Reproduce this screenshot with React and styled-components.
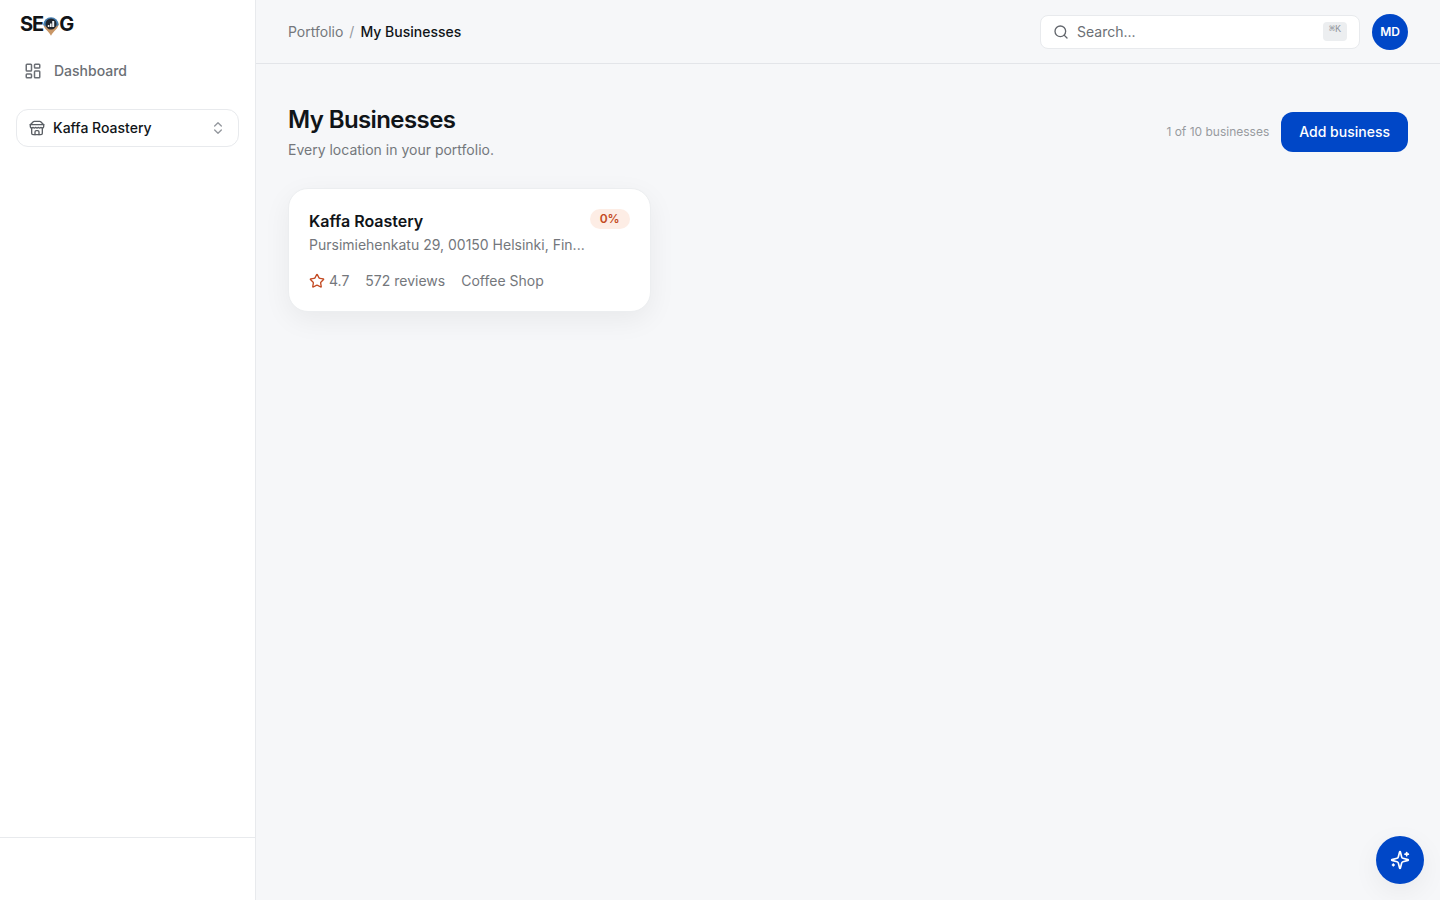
import React from "react";
import styled, { createGlobalStyle } from "styled-components";
import { ChevronsUpDown, LayoutDashboard, Search, Star } from "lucide-react";

const GlobalStyle = createGlobalStyle`
  *, *::before, *::after { box-sizing: border-box; }
  body {
    margin: 0;
    background: #f6f7f9;
    color: #101418;
    font-family: Inter, "Liberation Sans", sans-serif;
    font-size: 14px;
    line-height: 20px;
  }
  button, input { font: inherit; }
  h1, h2, p { margin: 0; }
  a { color: inherit; text-decoration: none; }
`;

const Shell = styled.div`
  display: flex;
  min-height: 100vh;
`;

const Sidebar = styled.aside`
  display: flex;
  flex-direction: column;
  flex: 0 0 256px;
  background: #ffffff;
  border-right: 1px solid #e8eaed;
`;

const LogoLink = styled.a`
  display: flex;
  align-items: center;
  height: 48px;
  padding: 0 20px;
`;

const Wordmark = styled.span`
  display: flex;
  align-items: center;
  font-size: 20px;
  line-height: 24px;
  font-weight: 700;
  letter-spacing: -0.05em;
  color: #111417;
`;

const SideNav = styled.nav`
  padding: 4px 16px;
`;

const NavItem = styled.a`
  display: flex;
  align-items: center;
  gap: 12px;
  height: 38px;
  padding: 0 8px;
  color: #6b6f75;
  font-weight: 500;
`;

const SwitcherWrap = styled.div`
  padding: 15px 16px;
`;

const Switcher = styled.button`
  display: flex;
  align-items: center;
  gap: 8px;
  width: 100%;
  height: 38px;
  padding: 0 12px;
  border: 1px solid #e8eaed;
  border-radius: 12px;
  background: #ffffff;
  color: #101418;
  font-weight: 500;

  span { flex: 1; text-align: left; }
`;

const SidebarFooter = styled.div`
  height: 63px;
  margin-top: auto;
  border-top: 1px solid #e8eaed;
`;

const Main = styled.div`
  flex: 1;
  min-width: 0;
`;

const TopBar = styled.header`
  display: flex;
  align-items: center;
  justify-content: space-between;
  height: 64px;
  padding: 0 32px;
  border-bottom: 1px solid #e3e5e9;
`;

const Breadcrumb = styled.nav`
  display: flex;
  gap: 6px;
  color: #74777c;

  span { color: #94989e; }
  strong { color: #101418; font-weight: 500; }
`;

const TopActions = styled.div`
  display: flex;
  align-items: center;
  gap: 12px;
`;

const SearchBox = styled.label`
  display: flex;
  align-items: center;
  gap: 8px;
  width: 320px;
  height: 34px;
  padding: 0 12px;
  border: 1px solid #e8eaed;
  border-radius: 8px;
  background: #ffffff;
  color: #62666c;
`;

const SearchInput = styled.input`
  flex: 1;
  min-width: 0;
  padding: 0;
  border: 0;
  outline: 0;
  background: transparent;
  color: #101418;

  &::placeholder { color: #6b6f75; opacity: 1; }
`;

const Shortcut = styled.kbd`
  height: 19px;
  padding: 0 6px;
  border-radius: 4px;
  background: #eceef0;
  color: #94989e;
  font-family: "Liberation Mono", monospace;
  font-size: 10px;
  line-height: 15px;
`;

const Avatar = styled.button`
  width: 36px;
  height: 36px;
  padding: 0;
  border: 0;
  border-radius: 50%;
  background: #0047c7;
  color: #ffffff;
  font-size: 12px;
  font-weight: 600;
`;

const Content = styled.main`
  display: flex;
  flex-direction: column;
  gap: 28px;
  padding: 40px 32px;
`;

const PageHeader = styled.div`
  display: flex;
  align-items: center;
  justify-content: space-between;
  gap: 16px;
`;

const Title = styled.h1`
  font-size: 24px;
  line-height: 32px;
  font-weight: 600;
  letter-spacing: -0.025em;
`;

const Subtitle = styled.p`
  margin-top: 4px;
  color: #74777c;
`;

const HeaderActions = styled.div`
  display: flex;
  align-items: center;
  gap: 12px;
`;

const Quota = styled.span`
  color: #989b9f;
  font-size: 12px;
`;

const PrimaryButton = styled.button`
  height: 40px;
  padding: 0 18px;
  border: 0;
  border-radius: 12px;
  background: #0047c7;
  color: #ffffff;
  font-weight: 500;
`;

const CardGrid = styled.div`
  display: grid;
  grid-template-columns: repeat(3, minmax(0, 1fr));
  gap: 16px;
`;

const Card = styled.a`
  display: block;
  padding: 20px;
  border: 1px solid #eceef0;
  border-radius: 20px;
  background: #ffffff;
  box-shadow: 0 8px 28px rgba(16, 20, 24, 0.06);
`;

const CardTop = styled.div`
  display: flex;
  align-items: flex-start;
  justify-content: space-between;
  gap: 4px;
`;

const CardText = styled.div`
  min-width: 0;
`;

const CardTitle = styled.h2`
  font-size: 16px;
  line-height: 24px;
  font-weight: 600;
`;

const Address = styled.p`
  overflow: hidden;
  color: #74777c;
  line-height: 24px;
  text-overflow: ellipsis;
  white-space: nowrap;
`;

const Badge = styled.span`
  flex: none;
  padding: 0 10px;
  border-radius: 10px;
  background: #fdede5;
  color: #c34a22;
  font-size: 12px;
  font-weight: 600;
`;

const Facts = styled.div`
  display: flex;
  align-items: center;
  gap: 16px;
  margin-top: 14px;
  color: #74777c;
`;

const Rating = styled.span`
  display: flex;
  align-items: center;
  gap: 4px;

  svg { color: #c34a22; }
`;

const AssistantButton = styled.button`
  position: fixed;
  right: 16px;
  bottom: 16px;
  display: grid;
  place-items: center;
  width: 48px;
  height: 48px;
  padding: 0;
  border: 0;
  border-radius: 50%;
  background: #0047c7;
  color: #ffffff;
  box-shadow: 0 8px 28px rgba(16, 20, 24, 0.06);
`;

const LineIcon = styled.svg.attrs({
  viewBox: "0 0 24 24",
  fill: "none",
  stroke: "currentColor",
  strokeWidth: 2,
  strokeLinecap: "round",
  strokeLinejoin: "round",
  "aria-hidden": true,
})`
  flex: none;
  width: ${(p) => p.$size}px;
  height: ${(p) => p.$size}px;
`;

const PinSvg = styled.svg`
  flex: none;
  margin-top: 4px;
`;

function PinMark() {
  return (
    <PinSvg width="16" height="20" viewBox="0 0 16 20" aria-hidden="true">
      <path d="M0.400 7.500C0.400 13 5.500 14.500 8 19.800C10.500 14.500 15.600 13 15.600 7.500Z" fill="#c99767" />
      <path d="M0.300 9A7.700 7.700 0 1 1 15.700 9L12.500 11H3.500Z" fill="#467eaf" />
      <circle cx="8" cy="8" r="5.500" fill="#20252d" />
      <path d="M4.800 9h1.600v2h-1.600zM7 7.500h1.600v3.500h-1.600zM9.200 5h2v6h-2z" fill="#f0f2f4" />
    </PinSvg>
  );
}

function StoreIcon() {
  return (
    <LineIcon $size={16} color="#5a5e64">
      <path d="m2 7 4.410-4.410A2 2 0 0 1 7.830 2h8.340a2 2 0 0 1 1.420.590L22 7" />
      <path d="M4 12v8a2 2 0 0 0 2 2h12a2 2 0 0 0 2-2v-8" />
      <path d="M15 22v-4a2 2 0 0 0-2-2h-2a2 2 0 0 0-2 2v4" />
      <path d="M2 7h20" />
      <path d="M22 7v3a2 2 0 0 1-2 2a2.700 2.700 0 0 1-1.590-.630.700.700 0 0 0-.820 0A2.700 2.700 0 0 1 16 12a2.700 2.700 0 0 1-1.590-.630.700.700 0 0 0-.820 0A2.700 2.700 0 0 1 12 12a2.700 2.700 0 0 1-1.590-.630.700.700 0 0 0-.820 0A2.700 2.700 0 0 1 8 12a2.700 2.700 0 0 1-1.590-.630.700.700 0 0 0-.820 0A2.700 2.700 0 0 1 4 12a2 2 0 0 1-2-2V7" />
    </LineIcon>
  );
}

function SparklesIcon() {
  return (
    <LineIcon $size={20}>
      <path d="M9.937 15.500A2 2 0 0 0 8.500 14.063l-6.135-1.582a.5.5 0 0 1 0-.962L8.500 9.936A2 2 0 0 0 9.937 8.500l1.582-6.135a.5.5 0 0 1 .963 0L14.063 8.500A2 2 0 0 0 15.500 9.937l6.135 1.581a.5.5 0 0 1 0 .964L15.500 14.063a2 2 0 0 0-1.437 1.437l-1.582 6.135a.5.5 0 0 1-.963 0z" />
      <path d="M20 3v4" />
      <path d="M22 5h-4" />
      <path d="M4 17v2" />
      <path d="M5 18H3" />
    </LineIcon>
  );
}

export default function App() {
  return (
    <>
      <GlobalStyle />
      <Shell>
        <Sidebar>
          <LogoLink href="#" aria-label="SEOG home">
            <Wordmark>SE<PinMark />G</Wordmark>
          </LogoLink>
          <SideNav>
            <NavItem href="#">
              <LayoutDashboard size={18} strokeWidth={2} />
              Dashboard
            </NavItem>
          </SideNav>
          <SwitcherWrap>
            <Switcher type="button">
              <StoreIcon />
              <span>Kaffa Roastery</span>
              <ChevronsUpDown size={16} strokeWidth={2} color="#94989e" />
            </Switcher>
          </SwitcherWrap>
          <SidebarFooter />
        </Sidebar>
        <Main>
          <TopBar>
            <Breadcrumb aria-label="Breadcrumb">
              <a href="#">Portfolio</a>
              <span>/</span>
              <strong>My Businesses</strong>
            </Breadcrumb>
            <TopActions>
              <SearchBox>
                <Search size={16} strokeWidth={2} />
                <SearchInput type="text" placeholder="Search..." aria-label="Search" />
                <Shortcut>⌘K</Shortcut>
              </SearchBox>
              <Avatar type="button">MD</Avatar>
            </TopActions>
          </TopBar>
          <Content>
            <PageHeader>
              <div>
                <Title>My Businesses</Title>
                <Subtitle>Every location in your portfolio.</Subtitle>
              </div>
              <HeaderActions>
                <Quota>1 of 10 businesses</Quota>
                <PrimaryButton type="button">Add business</PrimaryButton>
              </HeaderActions>
            </PageHeader>
            <CardGrid>
              <Card href="#">
                <CardTop>
                  <CardText>
                    <CardTitle>Kaffa Roastery</CardTitle>
                    <Address>Pursimiehenkatu 29, 00150 Helsinki, Fin...</Address>
                  </CardText>
                  <Badge>0%</Badge>
                </CardTop>
                <Facts>
                  <Rating><Star size={16} strokeWidth={2} />4.7</Rating>
                  <span>572 reviews</span>
                  <span>Coffee Shop</span>
                </Facts>
              </Card>
            </CardGrid>
          </Content>
        </Main>
      </Shell>
      <AssistantButton type="button" aria-label="Open assistant">
        <SparklesIcon />
      </AssistantButton>
    </>
  );
}
